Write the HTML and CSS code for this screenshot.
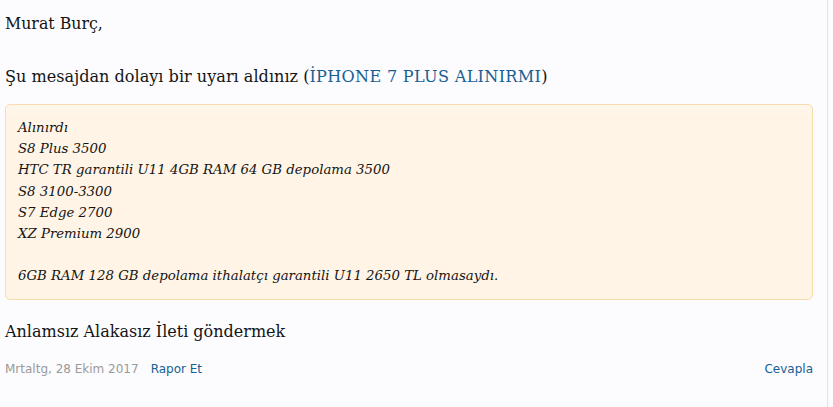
FILE: index.html
```html
<!DOCTYPE html>
<html lang="tr">
<head>
<meta charset="utf-8">
<title>Uyarı</title>
<link rel="stylesheet" href="styles.css">
</head>
<body>
<div class="page">
  <div class="message">
    <p class="greeting">Murat Burç,</p>
    <p class="notice">Şu mesajdan dolayı bir uyarı aldınız (<a class="link" href="#">İPHONE 7 PLUS ALINIRMI</a>)</p>
    <blockquote class="quote">
      <div>Alınırdı</div>
      <div>S8 Plus 3500</div>
      <div>HTC TR garantili U11 4GB RAM 64 GB depolama 3500</div>
      <div>S8 3100-3300</div>
      <div>S7 Edge 2700</div>
      <div>XZ Premium 2900</div>
      <div class="blank">&nbsp;</div>
      <div>6GB RAM 128 GB depolama ithalatçı garantili U11 2650 TL olmasaydı.</div>
    </blockquote>
    <p class="reason">Anlamsız Alakasız İleti göndermek</p>
  </div>
  <div class="footer">
    <div class="meta">
      <span class="date">Mrtaltg, 28 Ekim 2017</span>
      <a class="action" href="#">Rapor Et</a>
    </div>
    <a class="action" href="#">Cevapla</a>
  </div>
</div>
</body>
</html>
```

FILE: styles.css
```css
html, body {
  margin: 0;
  padding: 0;
  background: #fcfcff;
}

.page {
  width: 828px;
  min-height: 407px;
  box-sizing: border-box;
  padding: 0 14px 0 5px;
  border-right: 1px solid #d8e6f3;
}

.message {
  font-family: "DejaVu Serif", Georgia, serif;
  font-size: 15.8px;
  line-height: 26.5px;
  color: #141414;
}

.greeting {
  margin: 0;
  padding-top: 11px;
}

.notice {
  margin: 26px 0 0 0;
  font-size: 16.1px;
}

.link {
  color: #176093;
  text-decoration: none;
  letter-spacing: 0.3px;
}

.quote {
  margin: 14px 0 0 0;
  padding: 12px 12px 12px 12px;
  border: 1px solid #f8dcae;
  border-radius: 5px;
  background: linear-gradient(#fff7ed, #fff4e6 12px, #fff4e6);
  font-style: italic;
  font-size: 13.3px;
  line-height: 21.2px;
}

.reason {
  margin: 19px 0 0 0;
  font-size: 16px;
}

.footer {
  display: flex;
  justify-content: space-between;
  align-items: baseline;
  margin-top: 17px;
  font-family: "DejaVu Sans", "Trebuchet MS", sans-serif;
  font-size: 12px;
}

.meta {
  display: flex;
  gap: 12px;
}

.date {
  color: #9a9a9a;
}

.action {
  color: #176093;
  text-decoration: none;
}
```
